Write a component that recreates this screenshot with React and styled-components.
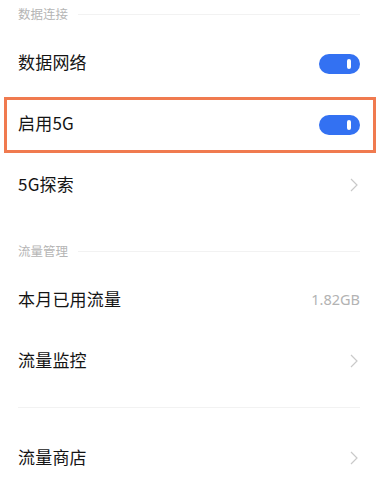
import React from "react";
import styled, { createGlobalStyle } from "styled-components";

const GlobalStyle = createGlobalStyle`
  html, body {
    margin: 0;
    padding: 0;
    background: #ffffff;
  }
  body {
    font-family: "Noto Sans CJK SC", "Noto Sans", "Liberation Sans", sans-serif;
    -webkit-font-smoothing: antialiased;
  }
`;

const Page = styled.div`
  width: 391px;
  height: 489px;
  overflow: hidden;
  background: #fff;
  padding: 0 31px 0 18px;
  box-sizing: border-box;
  display: flex;
  flex-direction: column;
`;

const SectionHeader = styled.div`
  display: flex;
  align-items: center;
  gap: 10px;
  height: 16px;
  padding-top: ${(p) => (p.first ? "6px" : "27px")};
  padding-bottom: 11px;
  font-size: 12.5px;
  color: #b5b5b5;
  line-height: 16px;

  &::after {
    content: "";
    flex: 1;
    height: 1px;
    background: #f2f2f2;
  }
`;

const Row = styled.div`
  position: relative;
  display: flex;
  align-items: center;
  justify-content: space-between;
  height: 61px;

  ${(p) =>
    p.highlighted &&
    `
    &::after {
      content: "";
      position: absolute;
      top: 3px;
      bottom: 2px;
      left: -14px;
      right: -16px;
      border: 3px solid #f07a4f;
      pointer-events: none;
    }
  `}
`;

const Title = styled.span`
  font-size: 17px;
  color: #141414;
  letter-spacing: 0.2px;
  margin-top: -4px;
`;

const Value = styled.span`
  font-size: 14.5px;
  color: #b3b3b3;
  font-family: "Noto Sans", "Liberation Sans", sans-serif;
  margin-top: -3px;
`;

const Toggle = styled.div`
  width: 41px;
  height: 20px;
  border-radius: 10px;
  background: ${(p) => (p.on ? "#3371f2" : "#d8d8d8")};
  display: flex;
  align-items: center;
  justify-content: ${(p) => (p.on ? "flex-end" : "flex-start")};
  padding: 0 9px;
  box-sizing: border-box;

  &::before {
    content: "";
    width: 4px;
    height: 10px;
    border-radius: 2px;
    background: #ffffff;
  }
`;

const Divider = styled.div`
  height: 1px;
  background: #f2f2f2;
  margin: 15px 0 20px;
`;

const Chevron = () => (
  <svg width="8" height="14" viewBox="0 0 8 14" style={{ marginRight: 2, marginTop: -2 }}>
    <path d="M1 1 L7 7 L1 13" fill="none" stroke="#c9c9c9" strokeWidth="1.2" />
  </svg>
);

export default function App() {
  return (
    <>
      <GlobalStyle />
      <Page>
        <SectionHeader first>数据连接</SectionHeader>
        <Row>
          <Title>数据网络</Title>
          <Toggle on />
        </Row>
        <Row highlighted>
          <Title>启用5G</Title>
          <Toggle on />
        </Row>
        <Row>
          <Title>5G探索</Title>
          <Chevron />
        </Row>

        <SectionHeader>流量管理</SectionHeader>
        <Row>
          <Title>本月已用流量</Title>
          <Value>1.82GB</Value>
        </Row>
        <Row>
          <Title>流量监控</Title>
          <Chevron />
        </Row>
        <Divider />
        <Row>
          <Title>流量商店</Title>
          <Chevron />
        </Row>
      </Page>
    </>
  );
}
